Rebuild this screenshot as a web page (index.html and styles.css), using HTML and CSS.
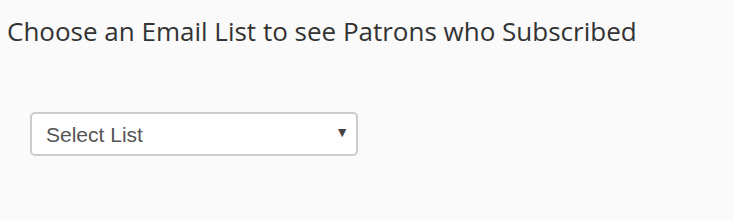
FILE: index.html
```html
<!DOCTYPE html>
<html lang="en">
<head>
    <meta charset="UTF-8">
    <title>Email Lists</title>
    <link rel="stylesheet" href="styles.css">
</head>
<body>

<h1 class="title">Choose an Email List to see Patrons who Subscribed</h1>

<div class="list-picker">
    <div class="select-wrap">
        <select id="listSelect">
            <option>Select List</option>
        </select>
        <span class="arrow">&#9660;</span>
    </div>
</div>

</body>
</html>
```

FILE: styles.css
```css
* {box-sizing: border-box; margin: 0; padding: 0;}
body {background-color: #fafafa; color: #333; padding: 14px 7px 0 7px;}
.title {font-family: "Open Sans", sans-serif; font-weight: 400; font-size: 26px; line-height: 34px; color: #333;}
.list-picker {padding: 64px 0 0 23px;}
.select-wrap {position: relative; width: 328px; height: 44px;}
.select-wrap select {width: 100%; height: 100%; appearance: none; -webkit-appearance: none; background-color: #fff; border: 2px solid #ccc; border-radius: 5px; padding: 0 14px; font-family: "Liberation Sans", Arial, sans-serif; font-size: 21px; color: #555; outline: none;}
.arrow {position: absolute; right: 9px; top: 13px; font-size: 14px; color: #444; pointer-events: none;}
```
